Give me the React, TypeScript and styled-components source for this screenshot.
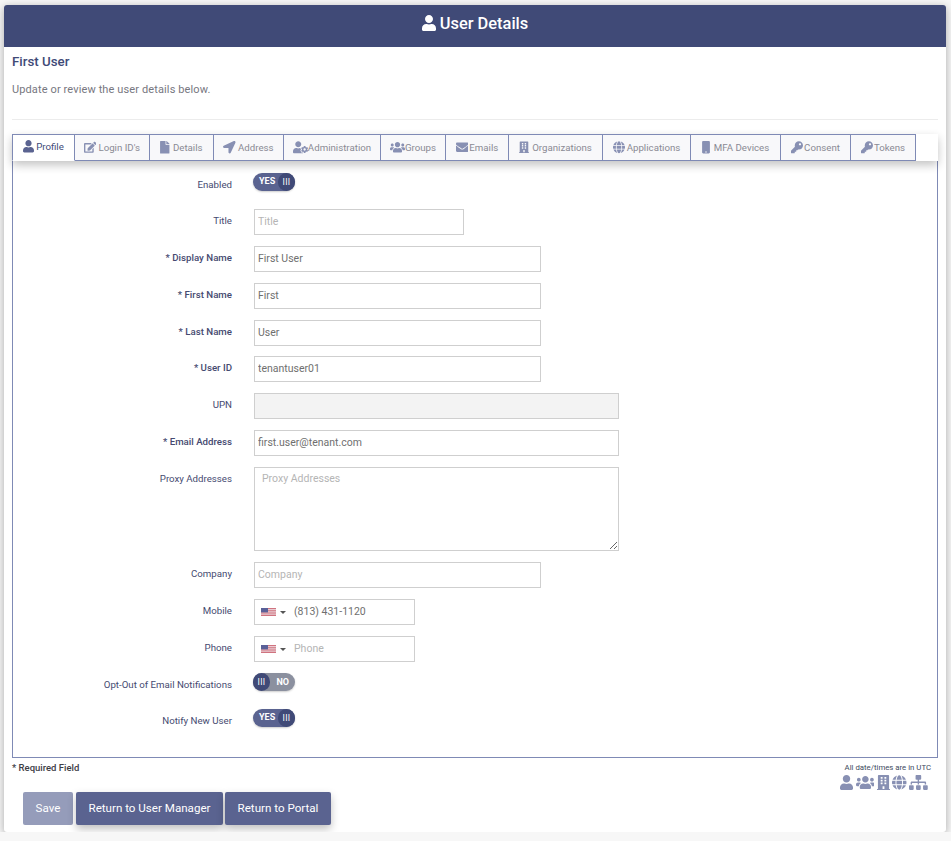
import React from "react";
import styled, { createGlobalStyle } from "styled-components";
import {
  FaUser, FaEdit, FaFile, FaLocationArrow, FaUserCog, FaUsers, FaEnvelope,
  FaBuilding, FaGlobe, FaMobile, FaKey, FaSitemap,
} from "react-icons/fa";

const Global = createGlobalStyle`
  html, body { margin: 0; padding: 0; background: #f7f7f7; }
  body { font-family: Roboto, "Liberation Sans", sans-serif; }
  * { box-sizing: border-box; }
`;

const Card = styled.div`
  width: 942px;
  height: 827px;
  margin: 5px 0 0 4px;
  background: #fff;
  border-radius: 3px;
  box-shadow: 0 2px 8px rgba(0, 0, 0, 0.32);
  overflow: hidden;
`;
const Header = styled.header`
  height: 42px;
  padding-bottom: 6px;
  background: #404a77;
  color: #fff;
  display: flex;
  align-items: center;
  justify-content: center;
  gap: 4px;
  font-size: 16.4px;
  font-weight: 500;
  svg { width: 14px; height: 16px; }
`;
const Body = styled.div`
  padding: 0 8px;
`;
const Name = styled.h2`
  margin: 0;
  padding-top: 6px;
  height: 30px;
  font-size: 13.3px;
  line-height: 17px;
  font-weight: 500;
  color: #404a77;
`;
const Intro = styled.p`
  margin: 0;
  padding-top: 5px;
  height: 42px;
  font-size: 11px;
  line-height: 16px;
  letter-spacing: 0.12px;
  color: #77777f;
`;
const Rule = styled.hr`
  margin: 0 0 14px;
  border: 0;
  border-top: 1px solid #ececec;
`;
const Tabs = styled.nav`
  display: flex;
  width: 926px;
  height: 27px;
  background: #fff;
  box-shadow: 0 4px 10px rgba(0, 0, 0, 0.24);
  position: relative;
`;
const Tab = styled.div<{ $w: number; $gap: number; $active?: boolean }>`
  width: ${(p) => p.$w}px;
  flex: none;
  height: 27px;
  display: flex;
  align-items: center;
  justify-content: center;
  gap: ${(p) => p.$gap}px;
  font-size: 9.7px;
  background: ${(p) => (p.$active ? "#fff" : "#f8f8fa")};
  color: ${(p) => (p.$active ? "#404a77" : "#8a8a94")};
  border-top: 1px solid #7f8ab5;
  border-right: 1px solid #7f8ab5;
  border-bottom: ${(p) => (p.$active ? "1px solid #fff" : "1px solid #7f8ab5")};
  border-left: ${(p) => (p.$active ? "1px solid #7f8ab5" : "0")};
  padding-bottom: ${(p) => (p.$active ? "2px" : "0")};
  svg {
    color: ${(p) => (p.$active ? "#5a6390" : "#8890b3")};
  }
`;
const IconBox = styled.span<{ $w: number; $h: number }>`
  flex: none;
  display: block;
  width: ${(p) => p.$w}px;
  height: ${(p) => p.$h}px;
  svg { display: block; width: 100%; height: 100%; }
`;
const Panel = styled.section`
  width: 926px;
  height: 598px;
  margin-top: -1px;
  border: 1px solid #7f8ab5;
  padding-top: 12px;
`;
const Row = styled.div<{ $h?: number; $mb?: number }>`
  display: flex;
  align-items: flex-start;
  height: ${(p) => p.$h ?? 26}px;
  margin-bottom: ${(p) => p.$mb ?? 11}px;
`;
const Label = styled.label<{ $required?: boolean }>`
  width: 219px;
  flex: none;
  text-align: right;
  font-size: 9.7px;
  line-height: 24px;
  font-weight: ${(p) => (p.$required ? 500 : 400)};
  color: #454a70;
  margin-right: 22px;
`;
const Input = styled.input<{ $w: number }>`
  width: ${(p) => p.$w}px;
  height: 26px;
  border: 1px solid #cfcfcf;
  border-radius: 0;
  padding: 0 3px 2px;
  font: 400 10.5px Roboto, sans-serif;
  color: #6f6f6f;
  background: ${(p) => (p.disabled ? "#f3f3f3" : "#fff")};
  outline: none;
  &::placeholder { color: #b5b5b5; opacity: 1; }
`;
const Area = styled.textarea`
  width: 365px;
  height: 84px;
  border: 1px solid #cfcfcf;
  border-radius: 0;
  padding: 4px 7px;
  font: 400 10.5px Roboto, sans-serif;
  outline: none;
  &::placeholder { color: #b5b5b5; opacity: 1; }
`;
const PhoneBox = styled.div`
  width: 161px;
  height: 26px;
  border: 1px solid #cfcfcf;
  display: flex;
  align-items: center;
  padding-left: 6px;
`;
const Caret = styled.span`
  margin-left: 4px;
  width: 0;
  height: 0;
  border-left: 3px solid transparent;
  border-right: 3px solid transparent;
  border-top: 3px solid #555;
`;
const PhoneInput = styled.input`
  width: 110px;
  margin: 0 0 2px 8px;
  border: 0;
  outline: none;
  padding: 0;
  font: 400 10.5px Roboto, sans-serif;
  color: #6f6f6f;
  &::placeholder { color: #b5b5b5; opacity: 1; }
`;
const Toggle = styled.div<{ $on: boolean }>`
  width: 42px;
  height: 18px;
  margin-left: -1px;
  border-radius: 9px;
  background: ${(p) => (p.$on ? "#5a6390" : "#8b909f")};
  display: flex;
  flex-direction: ${(p) => (p.$on ? "row" : "row-reverse")};
  align-items: center;
  justify-content: space-between;
  color: #fff;
  font-size: 9px;
  font-weight: 700;
  box-shadow: 0 1px 2px rgba(0, 0, 0, 0.2);
`;
const ToggleText = styled.span<{ $on: boolean }>`
  padding: ${(p) => (p.$on ? "0 0 2px 6px" : "0 6px 0 0")};
  line-height: 12px;
`;
const Knob = styled.span`
  width: 17px;
  height: 18px;
  border-radius: 9px;
  background: #404a77;
  display: flex;
  align-items: center;
  justify-content: center;
  font-size: 8.5px;
  font-weight: 400;
  letter-spacing: 0.3px;
`;
const Footer = styled.div`
  display: flex;
  justify-content: space-between;
  align-items: flex-start;
`;
const Required = styled.div`
  padding-top: 4px;
  height: 34px;
  font-size: 9.5px;
  line-height: 12px;
  font-weight: 500;
  color: #3d3d45;
`;
const Buttons = styled.div`
  display: flex;
  gap: 2px;
  padding-left: 11px;
`;
const Button = styled.button<{ $w: number; $disabled?: boolean }>`
  width: ${(p) => p.$w}px;
  height: 33px;
  border: 0;
  padding: 0 0 1px;
  margin-right: ${(p) => (p.$disabled ? "1px" : "0")};
  border-radius: 2px;
  color: #fff;
  background: ${(p) => (p.$disabled ? "#959cba" : "#5a6390")};
  font: 400 11.6px Roboto, sans-serif;
  box-shadow: ${(p) => (p.$disabled ? "none" : "0 4px 8px rgba(0,0,0,.25)")};
`;
const Side = styled.div`
  padding: 5px 7px 0 0;
  display: flex;
  flex-direction: column;
  align-items: flex-end;
`;
const Utc = styled.div`
  font-size: 7.8px;
  line-height: 9px;
  color: #404a60;
`;
const Legend = styled.div`
  display: flex;
  gap: 2.5px;
  margin: 3px 3px 0 0;
  color: #8890b3;
`;

const Flag = () => (
  <svg width="15" height="8" viewBox="0 0 15 8">
    <rect width="15" height="8" fill="#d0737f" />
    <rect y="1.2" width="15" height="1" fill="#efe3e8" />
    <rect y="3.4" width="15" height="1" fill="#efe3e8" />
    <rect y="5.6" width="15" height="1" fill="#efe3e8" />
    <rect width="7" height="4.4" fill="#5a6098" />
  </svg>
);

const tabs: [string, number, React.ComponentType, number, number][] = [
  ["Profile", 63, FaUser, 11, 2],
  ["Login ID's", 75, FaEdit, 12.5, 2],
  ["Details", 64, FaFile, 9.5, 3],
  ["Address", 70, FaLocationArrow, 12.5, 2],
  ["Administration", 97, FaUserCog, 15, 0],
  ["Groups", 65, FaUsers, 15, 0],
  ["Emails", 63, FaEnvelope, 12.5, 1],
  ["Organizations", 94, FaBuilding, 10, 3],
  ["Applications", 88, FaGlobe, 12, 2],
  ["MFA Devices", 90, FaMobile, 8, 4],
  ["Consent", 70, FaKey, 12, 1],
  ["Tokens", 65, FaKey, 12, 1],
];

const legend: [React.ComponentType, number][] = [
  [FaUser, 13],
  [FaUsers, 18.75],
  [FaBuilding, 13],
  [FaGlobe, 14.5],
  [FaSitemap, 18.75],
];

const Sw = ({ on }: { on: boolean }) => (
  <Toggle $on={on}>
    <ToggleText $on={on}>{on ? "YES" : "NO"}</ToggleText>
    <Knob>III</Knob>
  </Toggle>
);

export default function App() {
  return (
    <>
      <Global />
      <Card>
        <Header><FaUser />User Details</Header>
        <Body>
          <Name>First User</Name>
          <Intro>Update or review the user details below.</Intro>
          <Rule />
          <Tabs>
            {tabs.map(([t, w, I, iw, g], i) => (
              <Tab key={t} $w={w} $gap={g} $active={i === 0}><IconBox $w={iw} $h={12.5}><I /></IconBox>{t}</Tab>
            ))}
          </Tabs>
          <Panel>
            <Row $h={18} $mb={18}><Label>Enabled</Label><Sw on /></Row>
            <Row><Label>Title</Label><Input $w={210} placeholder="Title" /></Row>
            <Row><Label $required>* Display Name</Label><Input $w={287} defaultValue="First User" /></Row>
            <Row><Label $required>* First Name</Label><Input $w={287} defaultValue="First" /></Row>
            <Row $mb={10}><Label $required>* Last Name</Label><Input $w={287} defaultValue="User" /></Row>
            <Row><Label $required>* User ID</Label><Input $w={287} defaultValue="tenantuser01" /></Row>
            <Row><Label>UPN</Label><Input $w={365} disabled /></Row>
            <Row><Label $required>* Email Address</Label><Input $w={365} defaultValue="first.user@tenant.com" /></Row>
            <Row $h={84}><Label>Proxy Addresses</Label><Area placeholder="Proxy Addresses" /></Row>
            <Row><Label>Company</Label><Input $w={287} placeholder="Company" /></Row>
            <Row>
              <Label>Mobile</Label>
              <PhoneBox><Flag /><Caret /><PhoneInput defaultValue="(813) 431-1120" /></PhoneBox>
            </Row>
            <Row><Label>Phone</Label>
              <PhoneBox><Flag /><Caret /><PhoneInput placeholder="Phone" /></PhoneBox>
            </Row>
            <Row $h={18} $mb={18}><Label>Opt-Out of Email Notifications</Label><Sw on={false} /></Row>
            <Row $h={18}><Label>Notify New User</Label><Sw on /></Row>
          </Panel>
          <Footer>
            <div>
              <Required>* Required Field</Required>
              <Buttons>
                <Button $w={50} $disabled>Save</Button>
                <Button $w={147}>Return to User Manager</Button>
                <Button $w={106}>Return to Portal</Button>
              </Buttons>
            </div>
            <Side>
              <Utc>All date/times are in UTC</Utc>
              <Legend>
                {legend.map(([I, w], i) => (
                  <IconBox key={i} $w={w} $h={15}><I /></IconBox>
                ))}
              </Legend>
            </Side>
          </Footer>
        </Body>
      </Card>
    </>
  );
}
